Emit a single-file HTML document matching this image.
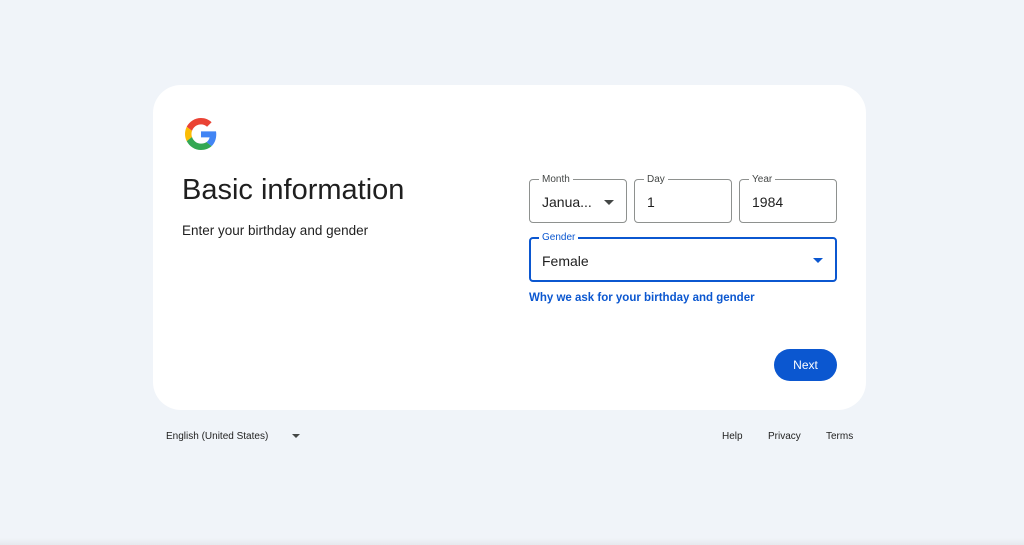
<!DOCTYPE html><html><head><style>
body{margin:0;width:1024px;height:545px;background:#f0f4f9;font-family:"Liberation Sans",sans-serif;position:relative;overflow:hidden;color:#1f1f1f}
.card{position:absolute;left:153px;top:85px;width:713px;height:325px;background:#fff;border-radius:28px}
.a{position:absolute}
.f{position:absolute;border:1px solid #8e918f;border-radius:4px;height:42px;box-sizing:border-box}
.l{position:absolute;top:-5px;left:9px;background:#fff;padding:0 3px;font-size:10px;color:#444746;line-height:10px}
.v{position:absolute;left:12px;top:14px;font-size:14px;line-height:16px}
.tri{position:absolute;width:0;height:0;border-left:5px solid transparent;border-right:5px solid transparent;border-top:5px solid #444746}
</style></head><body>
<div class="card"></div>
<svg class="a" style="left:185px;top:118px" width="32" height="32" viewBox="0 0 48 48"><path fill="#EA4335" d="M24 9.5c3.5 0 6.6 1.2 9.1 3.6l6.8-6.8C35.8 2.4 30.4 0 24 0 14.6 0 6.6 5.4 2.6 13.2l7.9 6.2C12.4 13.7 17.7 9.5 24 9.5z"/><path fill="#4285F4" d="M46.9 24.5c0-1.6-.1-3.1-.4-4.5H24v9h12.9c-.6 3-2.3 5.5-4.8 7.2l7.7 6c4.5-4.2 7.1-10.3 7.1-17.7z"/><path fill="#FBBC05" d="M10.5 28.6c-.5-1.4-.8-3-.8-4.6s.3-3.2.8-4.6l-7.9-6.2C.9 16.5 0 20.1 0 24s.9 7.5 2.6 10.8l7.9-6.2z"/><path fill="#34A853" d="M24 48c6.5 0 11.9-2.1 15.9-5.8l-7.7-6c-2.2 1.5-5 2.3-8.2 2.3-6.3 0-11.6-4.2-13.5-10l-7.9 6.2C6.6 42.6 14.6 48 24 48z"/></svg>
<div class="a" style="left:182px;top:173px;font-size:29px;line-height:34px">Basic information</div>
<div class="a" style="left:182px;top:223px;font-size:13.5px;line-height:16px;color:#1f1f1f">Enter your birthday and gender</div>
<div class="f" style="left:529px;top:179px;width:98px;height:44px"><span class="l">Month</span><span class="v">Janua...</span><span class="tri" style="left:74px;top:20px"></span></div>
<div class="f" style="left:634px;top:179px;width:98px;height:44px"><span class="l">Day</span><span class="v">1</span></div>
<div class="f" style="left:739px;top:179px;width:98px;height:44px"><span class="l">Year</span><span class="v">1984</span></div>
<div class="f" style="left:529px;top:237px;width:308px;height:45px;border:2px solid #0b57d0"><span class="l" style="color:#0b57d0;left:8px;top:-6px">Gender</span><span class="v" style="left:11px;top:14px">Female</span><span class="tri" style="left:282px;top:19px;border-top-color:#0b57d0"></span></div>
<div class="a" style="left:529px;top:291px;font-size:11.5px;font-weight:bold;color:#0b57d0;line-height:14px">Why we ask for your birthday and gender</div>
<div class="a" style="left:774px;top:349px;width:63px;height:32px;border-radius:16px;background:#0b57d0;color:#fff;font-size:12px;line-height:32px;text-align:center">Next</div>
<div class="a" style="left:166px;top:431px;font-size:10px;line-height:12px">English (United States)</div>
<span class="tri" style="left:292px;top:434px;border-left-width:4px;border-right-width:4px;border-top-width:4px"></span>
<div class="a" style="left:722px;top:431px;font-size:10px;line-height:12px">Help</div>
<div class="a" style="left:768px;top:431px;font-size:10px;line-height:12px">Privacy</div>
<div class="a" style="left:826px;top:431px;font-size:10px;line-height:12px">Terms</div>
<div class="a" style="left:0;top:538px;width:1024px;height:7px;background:linear-gradient(#f0f4f9,#e6e9ee)"></div>
</body></html>
